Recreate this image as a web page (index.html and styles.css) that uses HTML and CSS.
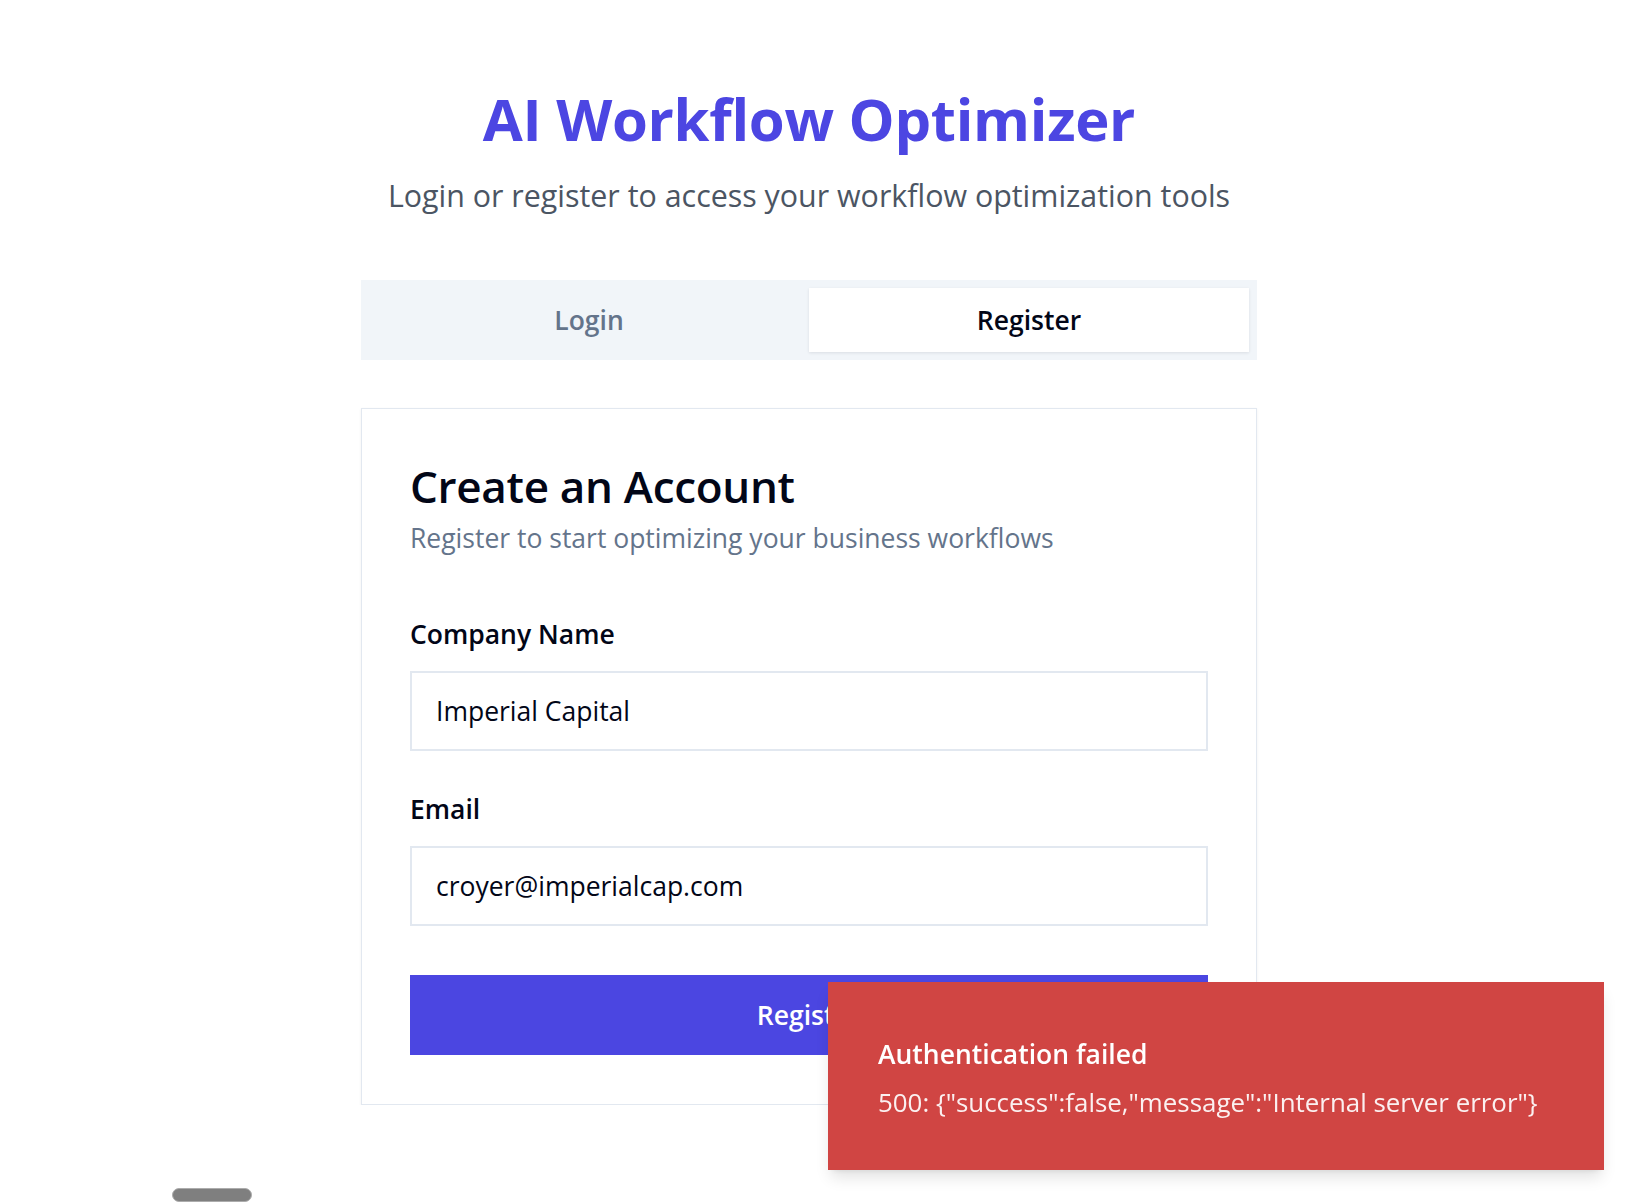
FILE: index.html
```html
<!DOCTYPE html>
<html lang="en">
<head>
<meta charset="utf-8">
<title>AI Workflow Optimizer</title>
<link rel="stylesheet" href="styles.css">
</head>
<body>
<main class="page">
  <header class="hero">
    <h1 class="hero-title">AI Workflow Optimizer</h1>
    <p class="hero-sub">Login or register to access your workflow optimization tools</p>
  </header>

  <div class="tabs">
    <button class="tab">Login</button>
    <button class="tab tab-active">Register</button>
  </div>

  <section class="card">
    <h2 class="card-title">Create an Account</h2>
    <p class="card-desc">Register to start optimizing your business workflows</p>

    <form class="form">
      <div class="field">
        <label class="label">Company Name</label>
        <div class="input">Imperial Capital</div>
      </div>
      <div class="field">
        <label class="label">Email</label>
        <div class="input">croyer@imperialcap.com</div>
      </div>
      <button type="button" class="submit">Register</button>
    </form>
  </section>
</main>

<div class="toast">
  <div class="toast-title">Authentication failed</div>
  <div class="toast-desc">500: {"success":false,"message":"Internal server error"}</div>
</div>

<div class="dev-pill"></div>
</body>
</html>
```

FILE: styles.css
```css
* { box-sizing: border-box; }

html, body {
  margin: 0;
  padding: 0;
  background: #ffffff;
  font-family: "Open Sans", "Noto Sans", sans-serif;
  color: #0f172a;
}

.page {
  width: 896px;
  margin: 0 auto;
  padding-top: 84px;
  position: relative;
  left: -6px;
  display: flex;
  flex-direction: column;
}

.hero {
  text-align: center;
}

.hero-title {
  margin: 0;
  font-size: 58px;
  line-height: 70px;
  font-weight: 700;
  color: #4c46e2;
  letter-spacing: -0.3px;
}

.hero-sub {
  margin: 24px 0 0;
  font-size: 30.4px;
  line-height: 36px;
  color: #4b5563;
}

.tabs {
  margin-top: 66px;
  height: 80px;
  padding: 8px;
  background: #f1f5f9;
  display: grid;
  grid-template-columns: 1fr 1fr;
}

.tab {
  border: 0;
  background: transparent;
  font-family: inherit;
  font-size: 26.5px;
  font-weight: 600;
  color: #64748b;
  padding: 0;
  cursor: pointer;
}

.tab-active {
  background: #ffffff;
  color: #020617;
  box-shadow: 0 1px 3px rgba(15, 23, 42, 0.1);
}

.card {
  margin-top: 48px;
  border: 1px solid #e2e8f0;
  background: #ffffff;
  padding: 48px 48px 49px;
  box-shadow: 0 1px 3px rgba(15, 23, 42, 0.06);
}

.card-title {
  margin: 0;
  font-size: 44px;
  line-height: 58px;
  font-weight: 600;
  color: #020617;
  letter-spacing: -0.3px;
}

.card-desc {
  margin: 5px 0 0;
  font-size: 26.5px;
  line-height: 36px;
  color: #64748b;
}

.form {
  margin-top: 60px;
  display: flex;
  flex-direction: column;
}

.field {
  display: flex;
  flex-direction: column;
  gap: 19px;
  margin-bottom: 40px;
}

.field + .field {
  margin-bottom: 49px;
}

.label {
  font-size: 26.5px;
  line-height: 36px;
  font-weight: 600;
  color: #020617;
}

.input {
  height: 80px;
  border: 2px solid #e2e8f0;
  padding: 0 24px;
  display: flex;
  align-items: center;
  font-size: 26.5px;
  color: #020617;
}

.submit {
  height: 80px;
  border: 0;
  background: #4b46e1;
  color: #ffffff;
  font-family: inherit;
  font-size: 26.5px;
  font-weight: 600;
  cursor: pointer;
}

.toast {
  position: fixed;
  right: 26px;
  bottom: 32px;
  width: 776px;
  padding: 50px 48px 46px 50px;
  background: #d04543;
  color: #ffffff;
  box-shadow: 0 10px 15px -3px rgba(0, 0, 0, 0.12), 0 4px 6px -4px rgba(0, 0, 0, 0.1);
  z-index: 10;
}

.toast-title {
  font-size: 26.5px;
  line-height: 44px;
  font-weight: 600;
}

.toast-desc {
  margin-top: 4px;
  font-size: 25.9px;
  line-height: 44px;
  opacity: 0.92;
}

.dev-pill {
  position: fixed;
  left: 172px;
  bottom: 0;
  width: 80px;
  height: 14px;
  border-radius: 7px;
  background: #7f7f7f;
  border: 1px solid #acacac;
}
```
